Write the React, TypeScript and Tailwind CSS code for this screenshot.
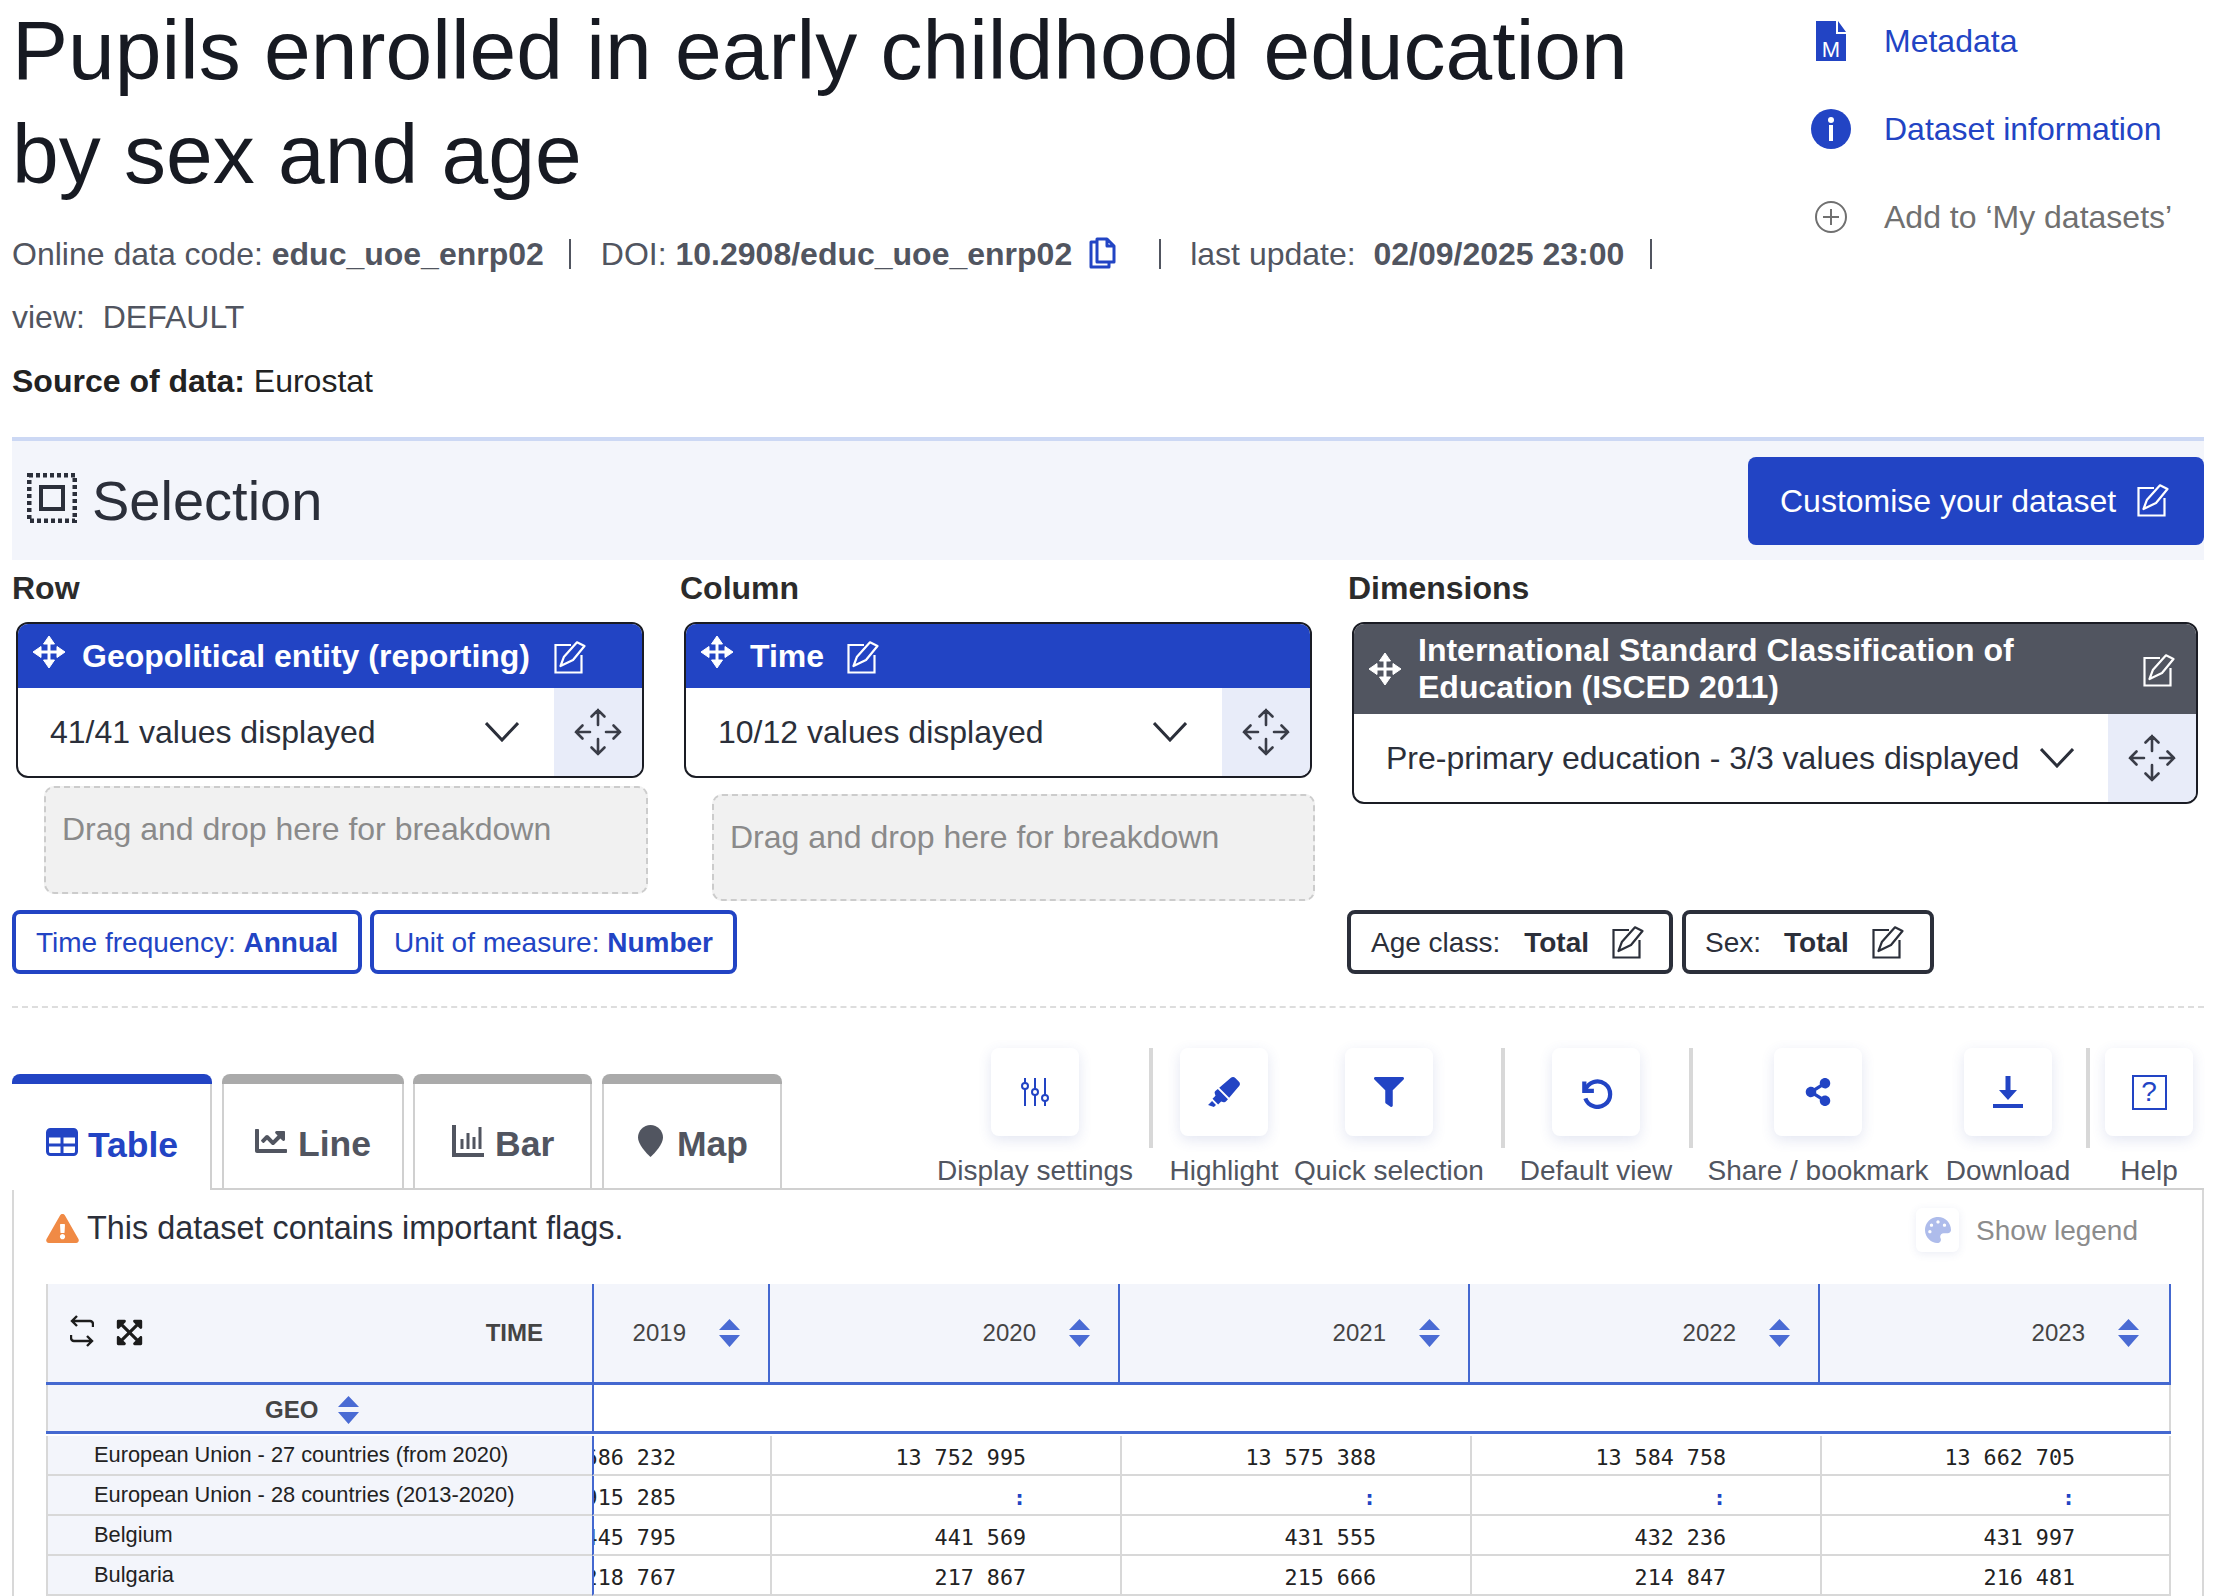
import { FaChartLine, FaExpandArrowsAlt, FaExclamationTriangle, FaFilter, FaHighlighter, FaPalette, FaShareAlt } from 'react-icons/fa';
import type { ReactNode } from 'react';

function EditIcon({ className }: { className?: string }) {
  return (
    <svg viewBox="0 0 32 33" fill="none" stroke="currentColor" strokeWidth="2.2" className={className}>
      <path d="M17 4H1.5v27.5h26V14" />
      <path d="M6.5 25L10 15.7 23 1.3 30.5 5 19 19z" strokeLinejoin="round" />
    </svg>
  );
}

function DragIcon({ className }: { className?: string }) {
  return (
    <svg viewBox="0 0 32 32" className={className} fill="currentColor" stroke="currentColor">
      <path d="M16 3v26M3 16h26" strokeWidth="3" fill="none" />
      <path d="M16 0l5.500 8H10.500zM16 32l-5.500-8h11zM0 16l8-5.500v11zM32 16l-8 5.500v-11z" strokeWidth="1" strokeLinejoin="round" />
    </svg>
  );
}

function MoveCell() {
  return (
    <div className="flex w-[88px] shrink-0 items-center justify-center bg-[#e8ecf9]">
      <svg viewBox="0 0 48 48" fill="none" stroke="#3a3d48" strokeWidth="2.6" strokeLinecap="round" className="h-[48px] w-[48px]">
        <path d="M24 2v15M17.500 8.500L24 2l6.500 6.500M24 46V31M17.500 39.500L24 46l6.500-6.500M2 24h14M8.500 17.500L2 24l6.500 6.500M46 24H32M39.500 17.500L46 24l-6.500 6.500" />
      </svg>
    </div>
  );
}

function Chevron() {
  return (
    <svg viewBox="0 0 34 20" fill="none" stroke="#2b2f3a" strokeWidth="3" className="h-[20px] w-[34px] shrink-0">
      <path d="M1 1l16 17L33 1" />
    </svg>
  );
}

function SortArrows({ className }: { className?: string }) {
  return (
    <svg viewBox="0 0 21 28" fill="#4a6bd4" className={`h-[28px] w-[21px] shrink-0 ${className ?? ''}`}>
      <path d="M10.500 0L21 11H0zM0 16h21L10.500 28z" />
    </svg>
  );
}

function DimCard({ title, value, editMl }: { title: string; value: string; editMl: string }) {
  return (
    <div className="h-[156px] w-[628px] overflow-hidden rounded-[12px] border-2 border-[#1a1c24]">
      <div className="flex h-[64px] items-center bg-[#2244c4] pl-[15px] text-white">
        <DragIcon className="mb-[8px] h-[32px] w-[32px]" />
        <span className="ml-[17px] whitespace-nowrap text-[32px] font-bold">{title}</span>
        <EditIcon className={`mt-[2px] h-[33px] w-[32px] ${editMl}`} />
      </div>
      <div className="flex h-[88px]">
        <div className="flex flex-1 items-center justify-between pl-[32px] pr-[35px]">
          <span className="whitespace-nowrap text-[32px] text-[#2b2f3a]">{value}</span>
          <Chevron />
        </div>
        <MoveCell />
      </div>
    </div>
  );
}

function DropBox({ className }: { className: string }) {
  return (
    <div className={`rounded-[10px] border-2 border-dashed border-[#cccccc] bg-[#f1f1f1] pl-[16px] pt-[21px] text-[32px] leading-[40px] text-[#8a8a8a] ${className}`}>
      Drag and drop here for breakdown
    </div>
  );
}

function Tab({ label, width, pad, gap, active, icon }: { label: string; width: string; pad: string; gap: string; active?: boolean; icon: ReactNode }) {
  return (
    <div className={`${width} ${active ? '-mb-[2px] relative z-10 bg-white' : ''}`}>
      <div className={`h-[10px] rounded-t-[8px] ${active ? 'bg-[#2244c4]' : 'bg-[#aaaaaa]'}`} />
      <div className={`flex items-center border-x-2 border-[#d0d0d0] pt-[18px] ${pad} ${gap} ${active ? 'h-[106px] border-l-0 text-[#2244c4]' : 'h-[104px] text-[#515560]'}`}>
        <div className="mb-[8px] flex items-center">{icon}</div>
        <span className="text-[35.5px] font-bold">{label}</span>
      </div>
    </div>
  );
}

function Tool({ label, width, ml, icon }: { label: string; width: string; ml?: string; icon: ReactNode }) {
  return (
    <div className={`flex flex-col items-center ${width} ${ml ?? ''}`}>
      <div className="flex h-[88px] w-[88px] items-center justify-center rounded-[8px] bg-white text-[#2244c4] shadow-[0_4px_14px_rgba(60,80,160,0.14)]">
        {icon}
      </div>
      <span className="mt-[18px] whitespace-nowrap text-[28px] leading-[34px] text-[#515560]">{label}</span>
    </div>
  );
}

function Sep({ ml }: { ml: string }) {
  return <div className={`h-[100px] w-[4px] shrink-0 bg-[#d8d8d8] ${ml}`} />;
}

function Chip({ children, className }: { children: ReactNode; className: string }) {
  return (
    <div className={`flex h-[64px] items-center rounded-[8px] border-4 pt-[1px] text-[28px] ${className}`}>
      {children}
    </div>
  );
}

const years = ['2019', '2020', '2021', '2022', '2023'];

const rows = [
  { geo: 'European Union - 27 countries (from 2020)', values: ['13 686 232', '13 752 995', '13 575 388', '13 584 758', '13 662 705'] },
  { geo: 'European Union - 28 countries (2013-2020)', values: ['13 915 285', ':', ':', ':', ':'] },
  { geo: 'Belgium', values: ['445 795', '441 569', '431 555', '432 236', '431 997'] },
  { geo: 'Bulgaria', values: ['218 767', '217 867', '215 666', '214 847', '216 481'] },
];

export default function App() {
  return (
    <div className="h-[1596px] w-[2238px] overflow-hidden bg-white pl-[12px] font-['Liberation_Sans',Arial,sans-serif] text-[#171a22]">
      <div className="flex h-[437px]">
        <div className="w-[1790px]">
          <h1 className="-mt-[2px] whitespace-nowrap text-[84px] leading-[104px] text-[#171a22]">
            Pupils enrolled in early childhood education
            <br />
            by sex and age
          </h1>
          <div className="mt-[16px] flex h-[64px] items-center whitespace-pre text-[32px] text-[#515560]">
            <span>Online data code: </span>
            <b>educ_uoe_enrp02</b>
            <span className="ml-[25px] h-[30px] w-[2px] bg-[#515560]" />
            <span className="ml-[30px]">DOI: </span>
            <b>10.2908/educ_uoe_enrp02</b>
            <svg viewBox="0 0 27 32" fill="none" stroke="#2244c4" strokeWidth="3" className="ml-[17px] mb-[3px] h-[32px] w-[27px]">
              <path d="M7 5H2v25h18v-5M8 2h10l7 7v16H8zM18 2v7h7" strokeLinejoin="round" />
            </svg>
            <span className="ml-[43px] h-[30px] w-[2px] bg-[#515560]" />
            <span className="ml-[29px]">last update:  </span>
            <b>02/09/2025 23:00</b>
            <span className="ml-[26px] h-[30px] w-[2px] bg-[#515560]" />
          </div>
          <div className="flex h-[63px] items-center whitespace-pre pb-[2px] text-[32px] text-[#515560]">view:  DEFAULT</div>
          <div className="flex h-[64px] items-center whitespace-pre text-[32px] text-[#222222]">
            <b>Source of data: </b>Eurostat
          </div>
        </div>
        <div className="flex flex-col pl-[9px] text-[32px]">
          <div className="mt-[21px] flex h-[40px] items-center text-[#2244c4]">
            <svg viewBox="0 0 30 40" className="ml-[5px] h-[40px] w-[30px]">
              <path d="M0 0h20v13h10v27H0zM22 0l8 11h-8z" fill="#2244c4" />
              <text x="15" y="35.500" textAnchor="middle" fontSize="22" fill="#ffffff" fontFamily="Liberation Sans">M</text>
            </svg>
            <span className="ml-[38px]">Metadata</span>
          </div>
          <div className="mt-[48px] flex h-[40px] items-center text-[#2244c4]">
            <svg viewBox="0 0 40 40" className="h-[40px] w-[40px]">
              <circle cx="20" cy="20" r="20" fill="#2244c4" />
              <circle cx="20" cy="11" r="3" fill="#ffffff" />
              <rect x="18" y="16" width="4" height="16" fill="#ffffff" />
            </svg>
            <span className="ml-[33px]">Dataset information</span>
          </div>
          <div className="mt-[48px] flex h-[40px] items-center text-[#707070]">
            <svg viewBox="0 0 32 32" fill="none" stroke="#707070" strokeWidth="2" className="ml-[4px] h-[32px] w-[32px]">
              <circle cx="16" cy="16" r="15" />
              <path d="M16 8v16M8 16h16" />
            </svg>
            <span className="ml-[37px] whitespace-nowrap">Add to ‘My datasets’</span>
          </div>
        </div>
      </div>

      <div className="flex h-[123px] w-[2192px] items-center justify-between border-t-4 border-[#ccd8f4] bg-[#f3f5fb] pl-[15px]">
        <div className="flex items-center text-[#2b2f3a]">
          <svg viewBox="0 0 50 50" fill="none" stroke="#2b2f3a" className="mb-[6px] h-[50px] w-[50px]">
            <rect x="2" y="2" width="46" height="46" strokeWidth="5" strokeDasharray="4 3" />
            <rect x="14" y="14" width="22" height="22" strokeWidth="4" />
          </svg>
          <span className="ml-[15px] text-[56px]">Selection</span>
        </div>
        <div className="flex h-[88px] w-[456px] items-center rounded-[8px] bg-[#2244c4] pl-[32px] text-[32px] text-white">
          Customise your dataset
          <EditIcon className="ml-[21px] h-[33px] w-[32px]" />
        </div>
      </div>

      <div className="flex h-[350px]">
        <div className="w-[668px]">
          <div className="mb-[6px] text-[32px] font-bold leading-[56px] text-[#2b2b2b]">Row</div>
          <div className="ml-[4px]">
            <DimCard title="Geopolitical entity (reporting)" value="41/41 values displayed" editMl="ml-[24px]" />
          </div>
          <DropBox className="ml-[32px] mt-[8px] h-[108px] w-[604px]" />
        </div>
        <div className="w-[668px]">
          <div className="mb-[6px] text-[32px] font-bold leading-[56px] text-[#2b2b2b]">Column</div>
          <div className="ml-[4px]">
            <DimCard title="Time" value="10/12 values displayed" editMl="ml-[23px]" />
          </div>
          <DropBox className="ml-[32px] mt-[16px] h-[107px] w-[603px]" />
        </div>
        <div className="w-[857px]">
          <div className="mb-[6px] text-[32px] font-bold leading-[56px] text-[#2b2b2b]">Dimensions</div>
          <div className="ml-[4px] h-[182px] w-[846px] overflow-hidden rounded-[12px] border-2 border-[#1a1c24]">
            <div className="flex h-[90px] items-center bg-[#515560] pl-[15px] pr-[21px] text-white">
              <DragIcon className="h-[32px] w-[32px] shrink-0" />
              <span className="ml-[17px] flex-1 text-[32px] font-bold leading-[37px]">
                International Standard Classification of
                <br />
                Education (ISCED 2011)
              </span>
              <EditIcon className="mt-[2px] h-[33px] w-[32px]" />
            </div>
            <div className="flex h-[88px]">
              <div className="flex flex-1 items-center justify-between pl-[32px] pr-[34px]">
                <span className="whitespace-nowrap text-[32px] text-[#2b2f3a]">Pre-primary education - 3/3 values displayed</span>
                <Chevron />
              </div>
              <MoveCell />
            </div>
          </div>
        </div>
      </div>

      <div className="flex">
        <div className="flex w-[1335px] gap-[8px] font-normal text-[#2244c4]">
          <Chip className="w-[350px] border-[#2244c4] pl-[20px]">
            <span className="whitespace-pre">Time frequency: <b>Annual</b></span>
          </Chip>
          <Chip className="w-[367px] border-[#2244c4] pl-[20px]">
            <span className="whitespace-pre">Unit of measure: <b>Number</b></span>
          </Chip>
        </div>
        <div className="flex gap-[9px] text-[#2b2f3a]">
          <Chip className="w-[326px] border-[#2b2f3a] pl-[20px]">
            <span>Age class:</span>
            <b className="ml-[24px]">Total</b>
            <EditIcon className="ml-[23px] h-[33px] w-[32px]" />
          </Chip>
          <Chip className="w-[252px] border-[#2b2f3a] pl-[19px]">
            <span>Sex:</span>
            <b className="ml-[23px]">Total</b>
            <EditIcon className="ml-[23px] h-[33px] w-[32px]" />
          </Chip>
        </div>
      </div>

      <div className="mt-[32px] w-[2192px] border-t-2 border-dashed border-[#dddddd]" />

      <div className="mt-[40px] flex h-[142px] w-[2192px] items-end justify-between border-b-2 border-[#d0d0d0] pr-[15px]">
        <div className="flex">
          <Tab
            active
            label="Table"
            width="w-[200px]"
            pad="pl-[34px]"
            gap="gap-[10px]"
            icon={
              <svg viewBox="0 0 32 28" className="h-[28px] w-[32px]" fill="none" stroke="currentColor">
                <rect x="1.500" y="1.500" width="29" height="25" rx="3" strokeWidth="3" />
                <path d="M1 6h30" strokeWidth="7" />
                <path d="M1 17h30M16 8v18" strokeWidth="3" />
              </svg>
            }
          />
          <div className="ml-[10px]">
            <Tab label="Line" width="w-[182px]" pad="pl-[31px]" gap="gap-[11px]" icon={<FaChartLine className="h-[32px] w-[32px]" />} />
          </div>
          <div className="ml-[9px]">
            <Tab
              label="Bar"
              width="w-[179px]"
              pad="pl-[37px]"
              gap="gap-[11px]"
              icon={
                <svg viewBox="0 0 32 32" className="h-[32px] w-[32px]" fill="none" stroke="currentColor">
                  <path d="M2 0v30h30" strokeWidth="4" />
                  <path d="M10 14v10M16 8v16M22 12v12M28 2v22" strokeWidth="3" />
                </svg>
              }
            />
          </div>
          <div className="ml-[10px]">
            <Tab
              label="Map"
              width="w-[180px]"
              pad="pl-[34px]"
              gap="gap-[14px]"
              icon={
                <svg viewBox="0 0 25 32" className="h-[32px] w-[25px]" fill="currentColor">
                  <path d="M12.500 0C5.600 0 0 5.600 0 12.500 0 19 8 28 12.500 32 17 28 25 19 25 12.500 25 5.600 19.400 0 12.500 0z" />
                </svg>
              }
            />
          </div>
        </div>

        <div className="flex h-[140px]">
          <Tool
            label="Display settings"
            width="w-[200px]"
            icon={
              <svg viewBox="0 0 28 28" fill="#ffffff" stroke="currentColor" strokeWidth="2" className="h-[28px] w-[28px]">
                <path d="M4 0v28M14 0v28M24 0v28" />
                <circle cx="4" cy="8" r="3" />
                <circle cx="14" cy="14" r="3" />
                <circle cx="24" cy="20" r="3" />
              </svg>
            }
          />
          <Sep ml="ml-[14px]" />
          <Tool label="Highlight" width="w-[120px]" ml="ml-[11px]" icon={<FaHighlighter className="h-[30px] w-[32px]" />} />
          <Tool label="Quick selection" width="w-[200px]" ml="ml-[5px]" icon={<FaFilter className="h-[30px] w-[32px]" />} />
          <Sep ml="ml-[12px]" />
          <Tool
            label="Default view"
            width="w-[160px]"
            ml="ml-[11px]"
            icon={
              <svg viewBox="0 0 32 32" fill="none" stroke="currentColor" strokeWidth="4" className="h-[34px] w-[34px]">
                <path d="M5 6v9h9" />
                <path d="M6 14A12 12 0 1 1 6 22" />
              </svg>
            }
          />
          <Sep ml="ml-[13px]" />
          <Tool label="Share / bookmark" width="w-[224px]" ml="ml-[13px]" icon={<FaShareAlt className="h-[28px] w-[26px]" />} />
          <Tool
            label="Download"
            width="w-[130px]"
            ml="ml-[13px]"
            icon={
              <svg viewBox="0 0 30 32" fill="currentColor" className="h-[32px] w-[30px]">
                <path d="M12.500 0h5v14h6.500L15 24 6 14h6.500zM0 28h30v4H0z" />
              </svg>
            }
          />
          <Sep ml="ml-[13px]" />
          <Tool
            label="Help"
            width="w-[80px]"
            ml="ml-[19px]"
            icon={
              <div className="flex h-[35px] w-[35px] items-center justify-center border-2 border-[#2244c4] text-[28px] leading-none">?</div>
            }
          />
        </div>
      </div>

      <div className="h-[406px] w-[2192px] border-x-2 border-[#d8d8d8] pl-[32px]">
        <div className="flex h-[94px] items-start justify-between pr-[64px]">
          <div className="flex items-center pt-[14px] text-[32.4px] text-[#2b2f3a]">
            <FaExclamationTriangle className="h-[29px] w-[33px] text-[#f08a45]" />
            <span className="ml-[8px]">This dataset contains important flags.</span>
          </div>
          <div className="flex items-center pt-[18px]">
            <div className="flex h-[44px] w-[43px] items-center justify-center rounded-[6px] bg-white shadow-[0_2px_8px_rgba(60,80,160,0.10)]">
              <FaPalette className="h-[26px] w-[26px] text-[#aebceb]" />
            </div>
            <span className="ml-[17px] mt-[2px] text-[28px] text-[#8c8c8c]">Show legend</span>
          </div>
        </div>

        <div className="grid h-[101px] w-[2125px] grid-cols-[546px_176px_350px_350px_350px_353px] border-b-[3px] border-[#4468d0] text-[24px] text-[#444444]">
          <div className="flex items-center border-l-2 border-[#d8d8d8] bg-[#f3f5fb] pr-[49px]">
            <svg viewBox="0 0 24 32" fill="none" stroke="#1c1c1c" strokeWidth="2.400" className="mb-[4px] ml-[22px] h-[32px] w-[24px]">
              <path d="M23 12V9a3 3 0 0 0-3-3H2M7 1L2 6l5 5M1 20v3a3 3 0 0 0 3 3h18M17 21l5 5-5 5" />
            </svg>
            <FaExpandArrowsAlt className="mb-[2px] ml-[21px] h-[29px] w-[29px] text-[#1c1c1c]" />
            <b className="ml-auto">TIME</b>
          </div>
          {years.map((y, i) => (
            <div key={y} className={`flex items-center justify-end border-l-2 border-[#4468d0] bg-[#f3f5fb] ${i === 4 ? 'border-r-2 pr-[30px]' : 'pr-[28px]'}`}>
              <span>{y}</span>
              <SortArrows className="ml-[33px]" />
            </div>
          ))}
        </div>

        <div className="grid h-[49px] w-[2125px] grid-cols-[546px_1579px] border-b-[3px] border-[#4468d0] text-[24px] text-[#444444]">
          <div className="flex items-center border-l-2 border-[#d8d8d8] bg-[#f3f5fb] pl-[217px] pt-[4px]">
            <b>GEO</b>
            <SortArrows className="ml-[20px]" />
          </div>
          <div className="border-x-2 border-l-[#4468d0] border-r-[#d8d8d8]" />
        </div>

        <div className="mt-[2px]">
          {rows.map((r) => (
            <div key={r.geo} className="grid h-[40px] w-[2125px] grid-cols-[546px_180px_350px_350px_350px_349px]">
              <div className="flex items-center whitespace-nowrap border-b-2 border-l-2 border-[#d8d8d8] bg-[#f3f5fb] pl-[46px] text-[21.8px] text-[#222222]">
                {r.geo}
              </div>
              {r.values.map((v, i) => (
                <div
                  key={i}
                  className={`flex justify-end overflow-hidden whitespace-pre border-b-2 border-r-2 border-[#d8d8d8] pr-[94px] pt-[9px] font-['DejaVu_Sans_Mono',monospace] text-[21.7px] leading-[26px] ${i === 0 ? 'border-l-2 border-l-[#4468d0]' : ''} ${v === ':' ? 'font-bold text-[#2244c4]' : 'text-[#222222]'}`}
                >
                  <span className="shrink-0">{v}</span>
                </div>
              ))}
            </div>
          ))}
        </div>
      </div>
    </div>
  );
}
